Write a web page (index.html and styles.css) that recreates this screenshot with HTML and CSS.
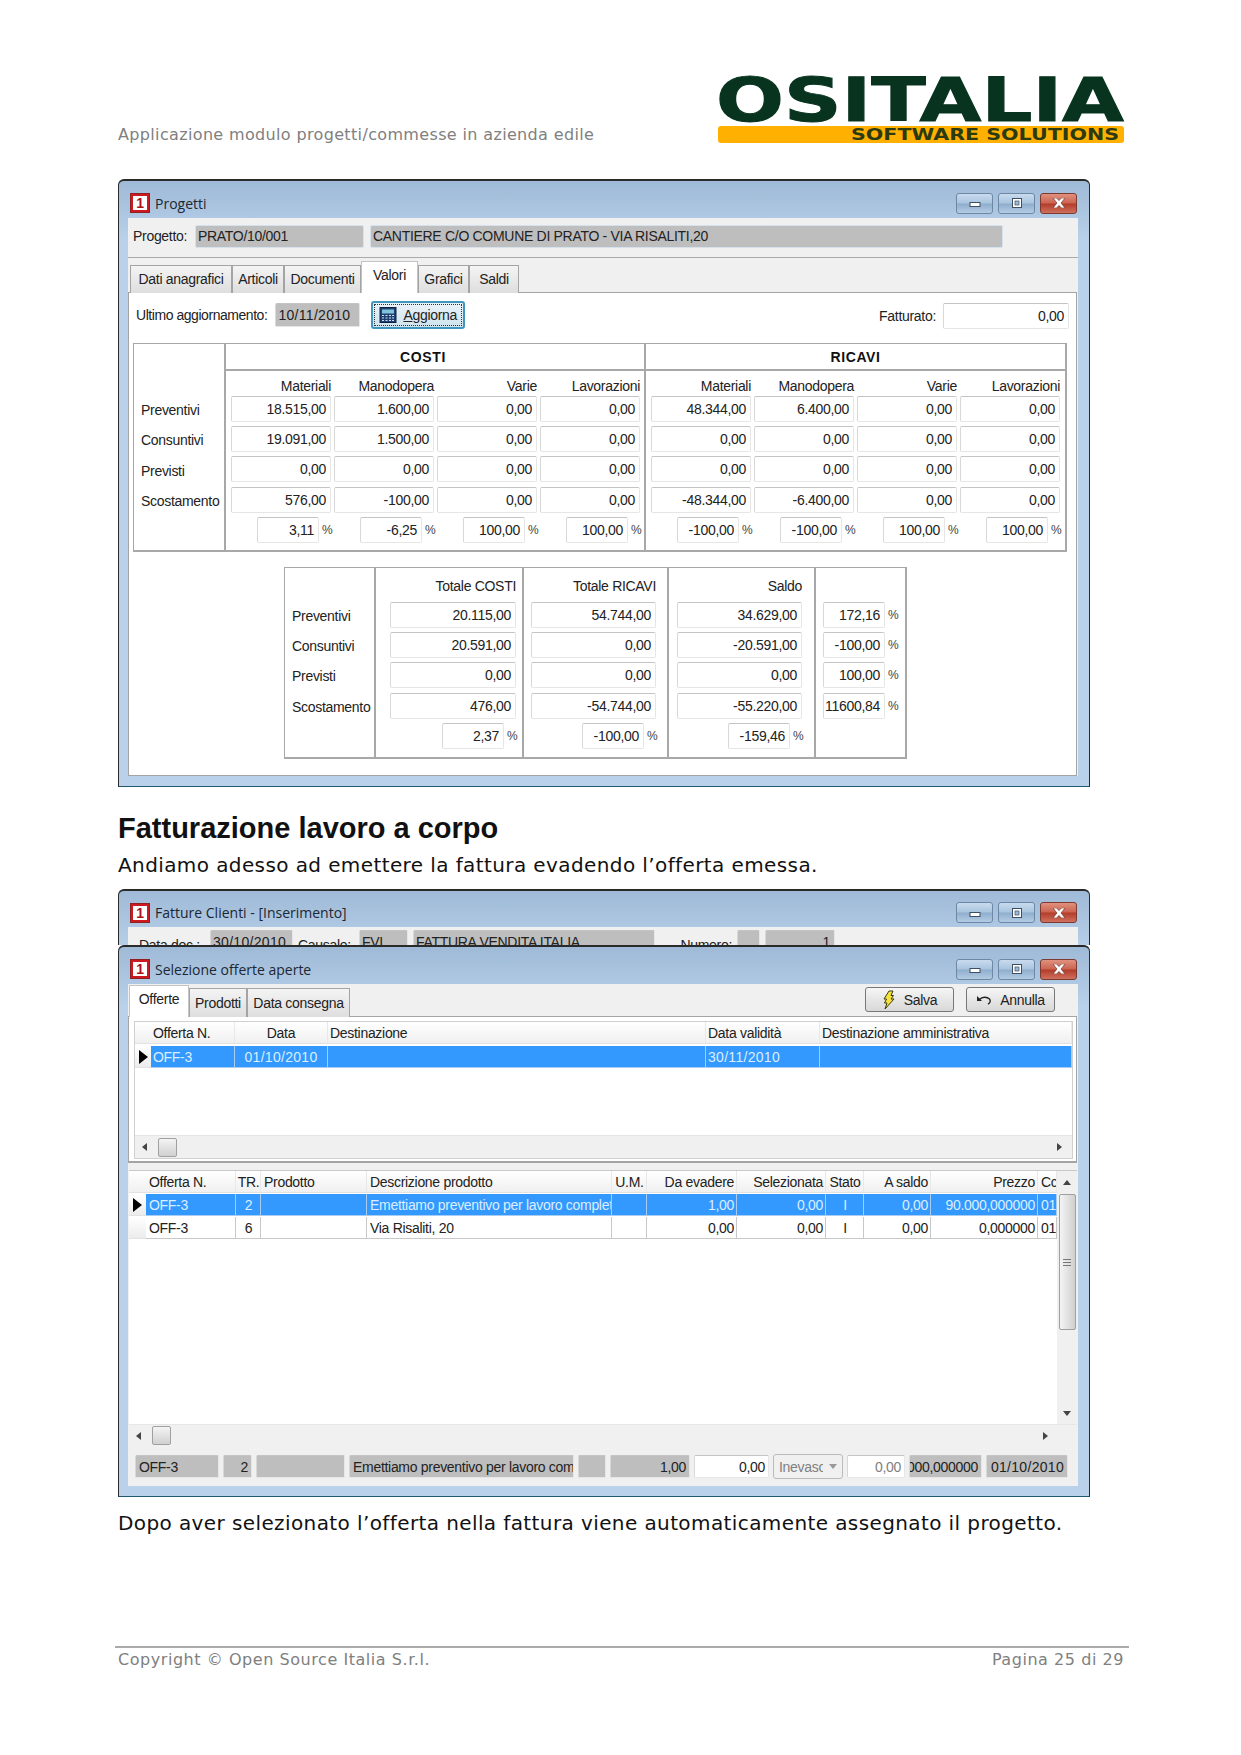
FILE: index.html
```html
<!DOCTYPE html>
<html lang="it">
<head>
    <meta charset="UTF-8">
    <meta name="viewport" content="width=device-width, initial-scale=1.0">
    <title>Applicazione modulo progetti/commesse in azienda edile</title>
    <link rel="stylesheet" href="styles.css">
</head>
<body>

<svg class="defs" xmlns="http://www.w3.org/2000/svg">
    <symbol id="ico-min" viewBox="0 0 14 10"><rect x="2" y="4.5" width="10" height="4" fill="#fff" stroke="#3d4f63"/></symbol>
    <symbol id="ico-max" viewBox="0 0 14 10"><rect x="2.5" y="0.5" width="9" height="9" fill="#fff" stroke="#3d4f63"/><rect x="5" y="3" width="4" height="4" fill="#9db9d6" stroke="#3d4f63" stroke-width="0.7"/></symbol>
    <symbol id="ico-close" viewBox="0 0 14 10"><path d="M1 0h3.6L7 2.6 9.4 0H13L9 5l4 5H9.4L7 7.4 4.6 10H1l4-5z" fill="#fff" stroke="#5a2a22" stroke-width="0.6"/></symbol>
</svg>

<div class="page">

    <header class="doc-head">
        <span class="doc-title">Applicazione modulo progetti/commesse in azienda edile</span>
        <svg class="logo" width="406" height="67" viewBox="0 0 406 67" xmlns="http://www.w3.org/2000/svg">
            <text x="-2" y="45" class="logo-main" textLength="408" lengthAdjust="spacingAndGlyphs">OSITALIA</text>
            <rect x="0" y="50" width="406" height="17" rx="3" fill="#ffb000"/>
            <text x="133" y="63.5" class="logo-sub" textLength="268" lengthAdjust="spacingAndGlyphs">SOFTWARE SOLUTIONS</text>
        </svg>
    </header>

    <section class="win win-progetti">
        <div class="titlebar">
            <span class="app-icon"><b>1</b></span>
            <span class="win-title">Progetti</span>
            <div class="win-buttons">
                <span class="wbtn"><svg width="14" height="10"><use href="#ico-min"/></svg></span>
                <span class="wbtn"><svg width="14" height="10"><use href="#ico-max"/></svg></span>
                <span class="wbtn wbtn-close"><svg width="14" height="10"><use href="#ico-close"/></svg></span>
            </div>
        </div>
        <div class="client">
            <div class="project-row">
                <span>Progetto:</span>
                <div class="field ro left">PRATO/10/001</div>
                <div class="field ro left">CANTIERE C/O COMUNE DI PRATO - VIA RISALITI,20</div>
            </div>
            <div class="tabs tabs-progetti">
                <div class="tab">Dati anagrafici</div>
                <div class="tab">Articoli</div>
                <div class="tab">Documenti</div>
                <div class="tab active">Valori</div>
                <div class="tab">Grafici</div>
                <div class="tab">Saldi</div>
            </div>
            <div class="panel">
                <div class="panel-toolbar">
                    <span class="upd-label">Ultimo aggiornamento:</span>
                    <div class="field ro left date date-field">10/11/2010</div>
                    <button class="btn-aggiorna">
                        <svg width="18" height="16" viewBox="0 0 18 16" xmlns="http://www.w3.org/2000/svg">
                            <rect x="1" y="0.5" width="16" height="15" fill="#1d3f72" stroke="#0e2244"/>
                            <rect x="3" y="2.5" width="12" height="4" fill="#7fc4d8"/>
                            <path d="M3 8.5h2M6.5 8.5h2M10 8.5h2M13 8.5h2M3 11h2M6.5 11h2M10 11h2M13 11h2M3 13.5h2M6.5 13.5h2M10 13.5h2M13 13.5h2" stroke="#cfe3ee" stroke-width="1.2"/>
                        </svg>
                        <span><u>A</u>ggiorna</span>
                    </button>
                    <span class="fatt-label">Fatturato:</span>
                    <div class="field fatt-field">0,00</div>
                </div>

                <div class="val-box">
                    <div class="val-labels">
                        <span>Preventivi</span>
                        <span>Consuntivi</span>
                        <span>Previsti</span>
                        <span>Scostamento</span>
                    </div>
                    <div class="val-head val-head-costi">COSTI</div>
                    <div class="val-head">RICAVI</div>
                    <div class="val-cols">
                        <span class="col-head">Materiali</span><span class="col-head">Manodopera</span><span class="col-head">Varie</span><span class="col-head">Lavorazioni</span>
                        <div class="field">18.515,00</div><div class="field">1.600,00</div><div class="field">0,00</div><div class="field">0,00</div>
                        <div class="field">19.091,00</div><div class="field">1.500,00</div><div class="field">0,00</div><div class="field">0,00</div>
                        <div class="field">0,00</div><div class="field">0,00</div><div class="field">0,00</div><div class="field">0,00</div>
                        <div class="field">576,00</div><div class="field">-100,00</div><div class="field">0,00</div><div class="field">0,00</div>
                        <div class="pct"><div class="field">3,11</div><i>%</i></div><div class="pct"><div class="field">-6,25</div><i>%</i></div><div class="pct"><div class="field">100,00</div><i>%</i></div><div class="pct"><div class="field">100,00</div><i>%</i></div>
                    </div>
                    <div class="val-cols">
                        <span class="col-head">Materiali</span><span class="col-head">Manodopera</span><span class="col-head">Varie</span><span class="col-head">Lavorazioni</span>
                        <div class="field">48.344,00</div><div class="field">6.400,00</div><div class="field">0,00</div><div class="field">0,00</div>
                        <div class="field">0,00</div><div class="field">0,00</div><div class="field">0,00</div><div class="field">0,00</div>
                        <div class="field">0,00</div><div class="field">0,00</div><div class="field">0,00</div><div class="field">0,00</div>
                        <div class="field">-48.344,00</div><div class="field">-6.400,00</div><div class="field">0,00</div><div class="field">0,00</div>
                        <div class="pct"><div class="field">-100,00</div><i>%</i></div><div class="pct"><div class="field">-100,00</div><i>%</i></div><div class="pct"><div class="field">100,00</div><i>%</i></div><div class="pct"><div class="field">100,00</div><i>%</i></div>
                    </div>
                </div>

                <div class="tot-box">
                    <div class="tot-col tot-labels">
                        <span class="col-head"></span>
                        <span>Preventivi</span>
                        <span>Consuntivi</span>
                        <span>Previsti</span>
                        <span>Scostamento</span>
                    </div>
                    <div class="tot-col tot-costi">
                        <span class="col-head">Totale COSTI</span>
                        <div class="field">20.115,00</div>
                        <div class="field">20.591,00</div>
                        <div class="field">0,00</div>
                        <div class="field">476,00</div>
                        <div class="pct"><div class="field">2,37</div><i>%</i></div>
                    </div>
                    <div class="tot-col tot-ricavi">
                        <span class="col-head">Totale RICAVI</span>
                        <div class="field">54.744,00</div>
                        <div class="field">0,00</div>
                        <div class="field">0,00</div>
                        <div class="field">-54.744,00</div>
                        <div class="pct"><div class="field">-100,00</div><i>%</i></div>
                    </div>
                    <div class="tot-col tot-saldo">
                        <span class="col-head">Saldo</span>
                        <div class="field">34.629,00</div>
                        <div class="field">-20.591,00</div>
                        <div class="field">0,00</div>
                        <div class="field">-55.220,00</div>
                        <div class="pct"><div class="field">-159,46</div><i>%</i></div>
                    </div>
                    <div class="tot-col tot-pct">
                        <span class="col-head"></span>
                        <div class="pct"><div class="field">172,16</div><i>%</i></div>
                        <div class="pct"><div class="field">-100,00</div><i>%</i></div>
                        <div class="pct"><div class="field">100,00</div><i>%</i></div>
                        <div class="pct"><div class="field">11600,84</div><i>%</i></div>
                    </div>
                </div>
            </div>
        </div>
    </section>

    <h2>Fatturazione lavoro a corpo</h2>
    <p class="lead">Andiamo adesso ad emettere la fattura evadendo l’offerta emessa.</p>

    <section class="win win-back">
        <div class="titlebar">
            <span class="app-icon"><b>1</b></span>
            <span class="win-title">Fatture Clienti - [Inserimento]</span>
            <div class="win-buttons">
                <span class="wbtn"><svg width="14" height="10"><use href="#ico-min"/></svg></span>
                <span class="wbtn"><svg width="14" height="10"><use href="#ico-max"/></svg></span>
                <span class="wbtn wbtn-close"><svg width="14" height="10"><use href="#ico-close"/></svg></span>
            </div>
        </div>
        <div class="client back-row">
            <span>Data doc.:</span>
            <div class="field ro left date">30/10/2010</div>
            <span>Causale:</span>
            <div class="field ro left">FVI</div>
            <div class="field ro left">FATTURA VENDITA ITALIA</div>
            <span class="num-label">Numero:</span>
            <div class="field ro"></div>
            <div class="field ro">1</div>
        </div>
    </section>

    <section class="win win-dialog">
        <div class="titlebar">
            <span class="app-icon"><b>1</b></span>
            <span class="win-title">Selezione offerte aperte</span>
            <div class="win-buttons">
                <span class="wbtn"><svg width="14" height="10"><use href="#ico-min"/></svg></span>
                <span class="wbtn"><svg width="14" height="10"><use href="#ico-max"/></svg></span>
                <span class="wbtn wbtn-close"><svg width="14" height="10"><use href="#ico-close"/></svg></span>
            </div>
        </div>
        <div class="client">
            <div class="dialog-top">
                <div class="tabs tabs-offerte">
                    <div class="tab active">Offerte</div>
                    <div class="tab">Prodotti</div>
                    <div class="tab">Data consegna</div>
                </div>
                <div class="dialog-actions">
                    <button class="btn-action">
                        <svg width="14" height="20" viewBox="0 0 14 20" xmlns="http://www.w3.org/2000/svg">
                            <path d="M7 1L2 9h2.5L2.5 13H5L3 19l9-10H9l2.5-3.5H9L11 1z" fill="#f5e23a" stroke="#3a3a10"/>
                        </svg>
                        Salva
                    </button>
                    <button class="btn-action">
                        <svg width="16" height="12" viewBox="0 0 16 12" xmlns="http://www.w3.org/2000/svg">
                            <path d="M1 2v5h5z" fill="#222"/>
                            <path d="M3.5 5.5C6 2.5 11 2.5 13.5 5c1.5 2 .5 4-1.5 5" fill="none" stroke="#222" stroke-width="1.4"/>
                        </svg>
                        Annulla
                    </button>
                </div>
            </div>

            <div class="offerte-panel">
                <div class="grid grid-offerte">
                    <div class="row head">
                        <div class="cell ind"></div>
                        <div class="cell">Offerta N.</div>
                        <div class="cell center">Data</div>
                        <div class="cell">Destinazione</div>
                        <div class="cell">Data validità</div>
                        <div class="cell">Destinazione amministrativa</div>
                    </div>
                    <div class="row selected">
                        <div class="cell ind"><span class="arrow"></span></div>
                        <div class="cell">OFF-3</div>
                        <div class="cell center date">01/10/2010</div>
                        <div class="cell"></div>
                        <div class="cell date">30/11/2010</div>
                        <div class="cell"></div>
                    </div>
                    <div class="grid-fill"></div>
                    <div class="hscroll">
                        <span class="tri tri-left"></span>
                        <span class="thumb"></span>
                        <span class="tri tri-right"></span>
                    </div>
                </div>
            </div>

            <div class="grid grid-righe">
                <div class="righe-body">
                    <div class="righe-table">
                        <div class="row head">
                            <div class="cell ind"></div>
                            <div class="cell">Offerta N.</div>
                            <div class="cell center">TR.</div>
                            <div class="cell">Prodotto</div>
                            <div class="cell">Descrizione prodotto</div>
                            <div class="cell center">U.M.</div>
                            <div class="cell right">Da evadere</div>
                            <div class="cell right">Selezionata</div>
                            <div class="cell center">Stato</div>
                            <div class="cell right">A saldo</div>
                            <div class="cell right">Prezzo</div>
                            <div class="cell">Cc</div>
                        </div>
                        <div class="row selected">
                            <div class="cell ind"><span class="arrow"></span></div>
                            <div class="cell">OFF-3</div>
                            <div class="cell center">2</div>
                            <div class="cell"></div>
                            <div class="cell">Emettiamo preventivo per lavoro completo</div>
                            <div class="cell"></div>
                            <div class="cell right">1,00</div>
                            <div class="cell right">0,00</div>
                            <div class="cell center">I</div>
                            <div class="cell right">0,00</div>
                            <div class="cell right">90.000,000000</div>
                            <div class="cell">01/10/2010</div>
                        </div>
                        <div class="row">
                            <div class="cell ind"></div>
                            <div class="cell">OFF-3</div>
                            <div class="cell center">6</div>
                            <div class="cell"></div>
                            <div class="cell">Via Risaliti, 20</div>
                            <div class="cell"></div>
                            <div class="cell right">0,00</div>
                            <div class="cell right">0,00</div>
                            <div class="cell center">I</div>
                            <div class="cell right">0,00</div>
                            <div class="cell right">0,000000</div>
                            <div class="cell">01/10/2010</div>
                        </div>
                    </div>
                    <div class="vscroll">
                        <span class="tri tri-up"></span>
                        <span class="vthumb"><span class="grip"></span></span>
                        <span class="vspace"></span>
                        <span class="tri tri-down"></span>
                    </div>
                </div>
                <div class="hscroll">
                    <span class="tri tri-left"></span>
                    <span class="thumb"></span>
                    <span class="tri tri-right"></span>
                </div>
            </div>

            <div class="bottom-fields">
                <div class="field ro left">OFF-3</div>
                <div class="field ro">2</div>
                <div class="field ro"></div>
                <div class="field ro left">Emettiamo preventivo per lavoro com</div>
                <div class="field ro"></div>
                <div class="field ro">1,00</div>
                <div class="field">0,00</div>
                <div class="combo"><span>Inevaso</span><span class="tri tri-down"></span></div>
                <div class="field dim">0,00</div>
                <div class="field ro">90.000,000000</div>
                <div class="field ro date">01/10/2010</div>
            </div>
        </div>
    </section>

    <p class="lead after">Dopo aver selezionato l’offerta nella fattura viene automaticamente assegnato il progetto.</p>

    <footer class="doc-foot">
        <span>Copyright © Open Source Italia S.r.l.</span>
        <span>Pagina 25 di 29</span>
    </footer>

</div>

</body>
</html>
```

FILE: styles.css
```css
* {
    box-sizing: border-box;
}
body {
    margin: 0;
    background: #fff;
    color: #111;
    font-family: "DejaVu Sans", sans-serif;
}
.defs {
    display: none;
}
.page {
    width: 1241px;
    padding: 76px 117px 0 118px;
}

/* document text */
.doc-head {
    display: flex;
    justify-content: space-between;
    align-items: flex-end;
    height: 67px;
}
.doc-title {
    margin-bottom: -2px;
    color: #808080;
    font-size: 16px;
    line-height: 20px;
    letter-spacing: 0.35px;
}
.logo {
    display: block;
    overflow: visible;
}
.logo-main {
    font-family: "DejaVu Sans", sans-serif;
    font-weight: bold;
    font-size: 60px;
    fill: #07331f;
    stroke: #07331f;
    stroke-width: 1;
}
.logo-sub {
    font-family: "DejaVu Sans", sans-serif;
    font-weight: bold;
    font-size: 15px;
    fill: #2c3a12;
}
h2 {
    margin: 27px 0 0;
    font-family: "Liberation Sans", sans-serif;
    font-size: 29px;
    line-height: 28px;
    font-weight: bold;
}
.lead {
    margin: 12px 0 13px;
    font-size: 20px;
    line-height: 22px;
    letter-spacing: 0.4px;
}
.lead.after {
    margin: 15px 0 0;
}
.doc-foot {
    display: flex;
    justify-content: space-between;
    margin: 112px -5px 0 -3px;
    padding: 2px 5px 0 3px;
    border-top: 2px solid #aaa;
    color: #808080;
    font-size: 16px;
    line-height: 20px;
    letter-spacing: 0.55px;
}

/* windows */
.win {
    width: 972px;
    padding: 0 11px 11px 9px;
    border: 1px solid #2a2a2a;
    border-top-width: 2px;
    border-bottom-color: #1d5a6e;
    border-radius: 6px 6px 0 0;
    background: linear-gradient(#9fbad7, #b9d1ea 60px);
    font-family: "Liberation Sans", sans-serif;
    font-size: 14px;
    letter-spacing: -0.3px;
    color: #222;
}
.win-progetti {
    height: 608px;
    margin-top: 36px;
}
.win-back {
    height: 56px;
    overflow: hidden;
    padding-bottom: 0;
    border-bottom: 0;
}
.win-dialog {
    height: 552px;
}
.titlebar {
    display: flex;
    align-items: center;
    height: 37px;
    margin: 0 1px 0 2px;
    padding-top: 7px;
}
.win-back .titlebar {
    height: 36px;
}
.app-icon {
    display: flex;
    align-items: center;
    justify-content: center;
    width: 20px;
    height: 20px;
    margin-right: 5px;
    border: 3px solid #cc1a20;
    outline: 1px solid #8e2020;
    outline-offset: -1px;
    background: #fff;
}
.app-icon b {
    color: #a81418;
    font: bold 14px/14px "Liberation Sans", sans-serif;
}
.win-title {
    font-family: "Open Sans", sans-serif;
    font-size: 14px;
    letter-spacing: 0;
    color: #1b2733;
}
.win-buttons {
    display: flex;
    gap: 5px;
    margin-left: auto;
}
.wbtn {
    display: flex;
    align-items: center;
    justify-content: center;
    width: 37px;
    height: 21px;
    border: 1px solid #6d88a5;
    border-radius: 3px;
    background: linear-gradient(#c9dbee, #a9c4de 48%, #8eadcd 52%, #b4cce4);
}
.wbtn-close {
    border-color: #7d3a30;
    background: linear-gradient(#e0917f, #cb6350 48%, #b23c2a 52%, #d0705e);
}
.client {
    background: #f0f0f0;
}

/* fields */
.field {
    display: flex;
    align-items: center;
    justify-content: flex-end;
    min-width: 0;
    height: 26px;
    padding: 0 4px;
    overflow: hidden;
    white-space: nowrap;
    border: 1px solid #e6e6e6;
    border-top-color: #c4c4c4;
    border-left-color: #d8d8d8;
    border-radius: 2px;
    background: #fff;
}
.field.left {
    justify-content: flex-start;
    padding: 0 2px;
}
.field.ro {
    background: #bebebe;
}
.field.dim {
    color: #808080;
}
.date {
    letter-spacing: 0.3px;
}
.pct {
    display: flex;
    justify-content: flex-end;
    align-items: center;
    gap: 3px;
}
.pct .field {
    width: 62px;
}
.pct i {
    width: 9px;
    font-style: normal;
    font-size: 12px;
    letter-spacing: -1px;
    color: #444;
}

/* Progetti window */
.project-row {
    display: grid;
    grid-template-columns: 56px 169px 633px;
    column-gap: 6px;
    align-items: center;
    height: 40px;
    padding: 0 0 3px 5px;
    border-bottom: 1px solid #aaa;
}
.project-row .field {
    height: 23px;
    border-color: #d5e2ee;
}
.tabs {
    display: grid;
    align-items: end;
    height: 34px;
}
.tabs-progetti {
    grid-template-columns: 102px 52px 77px 57px 51px 50px;
    margin-left: 2px;
}
.tabs-progetti .tab {
    padding-bottom: 2px;
}
.tabs-offerte {
    grid-template-columns: 60px 58px 103px;
    height: 32px;
    margin-left: 1px;
}
.tab {
    display: flex;
    align-items: center;
    justify-content: center;
    height: 28px;
    margin-bottom: -1px;
    border: 1px solid #a4a4a4;
    border-bottom: 0;
    background: linear-gradient(#f4f4f4, #dedede);
}
.tab.active,
.tabs-progetti .tab.active {
    position: relative;
    height: 32px;
    padding-bottom: 5px;
    border-color: #c4c4c4;
    background: #fff;
    z-index: 1;
}
.tabs-offerte .tab {
    height: 29px;
}
.tabs-offerte .tab.active {
    height: 32px;
}
.panel {
    height: 484px;
    margin-right: 1px;
    border: 1px solid #a4a4a4;
    background: #fff;
}
.panel-toolbar {
    display: flex;
    align-items: center;
    height: 50px;
    padding: 0 7px 6px 7px;
}
.upd-label {
    letter-spacing: -0.45px;
}
.date-field {
    width: 85px;
    height: 24px;
    margin: -1px 0 0 8px;
    padding-left: 2px;
}
.btn-aggiorna {
    display: flex;
    align-items: center;
    gap: 6px;
    width: 94px;
    height: 28px;
    margin: -1px 0 0 11px;
    padding: 0 4px 0 6px;
    border: 2px solid #3f97bd;
    border-radius: 3px;
    outline: 1px dotted #333;
    outline-offset: -4px;
    background: linear-gradient(#eaf3f8, #cfe3ee);
    font: inherit;
    letter-spacing: inherit;
    color: inherit;
}
.fatt-label {
    margin: 2px 7px 0 auto;
}
.fatt-field {
    width: 126px;
    margin-top: 2px;
}

/* valori table */
.val-box {
    display: grid;
    grid-template-columns: 92px 418px 1fr;
    grid-template-rows: 27px 1fr;
    width: 934px;
    height: 209px;
    margin-left: 4px;
    border: 2px solid #a8a8a8;
    border-width: 1px 2px 2px 1px;
}
.val-labels {
    grid-row: 1 / 3;
    display: grid;
    grid-auto-rows: 26px;
    row-gap: 4.25px;
    padding: 53px 0 0 7px;
    border-right: 2px solid #a8a8a8;
}
.val-labels span,
.tot-labels span {
    display: flex;
    align-items: center;
}
.val-head {
    display: flex;
    align-items: center;
    justify-content: center;
    border-bottom: 2px solid #a8a8a8;
    font-weight: bold;
    letter-spacing: 0.6px;
    color: #111;
}
.val-head-costi {
    padding-right: 24px;
}
.val-head + .val-head {
    border-left: 2px solid #a8a8a8;
}
.val-cols {
    display: grid;
    grid-template-columns: repeat(4, 100px);
    grid-template-rows: 20.5px repeat(5, 26px);
    column-gap: 3px;
    row-gap: 4.25px;
    padding-left: 5px;
}
.val-cols + .val-cols {
    border-left: 2px solid #a8a8a8;
    padding-left: 5px;
}
.val-cols .col-head {
    height: 20.5px;
    line-height: 30px;
}
.col-head {
    display: block;
    text-align: right;
    white-space: nowrap;
}

/* totals table */
.tot-box {
    display: grid;
    grid-template-columns: 89px 148px 145px 147px 1fr;
    width: 623px;
    height: 192px;
    margin: 15px 0 0 155px;
    border: 2px solid #a8a8a8;
    border-width: 1px 2px 2px 1px;
}
.tot-col {
    display: grid;
    grid-template-rows: 25.6px;
    grid-auto-rows: 26px;
    row-gap: 4.25px;
    padding-top: 4px;
    border-left: 2px solid #a8a8a8;
}
.tot-labels {
    padding: 5px 0 0 7px;
    border-left: 0;
}
.tot-costi {
    padding-left: 14px;
    padding-right: 6px;
}
.tot-ricavi {
    padding-left: 7px;
    padding-right: 11px;
}
.tot-saldo {
    padding-left: 8px;
    padding-right: 12px;
}
.tot-pct {
    padding-left: 7px;
}
.tot-col .col-head {
    height: 25.6px;
    line-height: 29px;
}
.tot-pct .pct {
    justify-content: flex-start;
}

/* Fatture window behind the dialog */
.back-row {
    display: grid;
    grid-template-columns: 66px 83px 56px 49px 242px 72px 23px 70px;
    column-gap: 5px;
    height: 20px;
    padding: 3px 0 0 11px;
    overflow: hidden;
    align-items: start;
}
.back-row span {
    padding-top: 7px;
}
.back-row .field {
    height: 26px;
    align-items: flex-start;
    padding-top: 3px;
}
.num-label {
    text-align: right;
}

/* dialog */
.dialog-top {
    display: flex;
    justify-content: space-between;
    height: 32px;
}
.dialog-actions {
    display: flex;
    gap: 12px;
    padding: 3px 23px 0 0;
}
.btn-action {
    display: flex;
    align-items: center;
    justify-content: center;
    gap: 8px;
    width: 89px;
    height: 25px;
    padding: 0;
    border: 1px solid #777;
    border-radius: 3px;
    background: linear-gradient(#f6f6f6, #e6e6e6 50%, #d8d8d8);
    font: inherit;
    letter-spacing: inherit;
    color: inherit;
}
.offerte-panel {
    height: 147px;
    margin-right: 1px;
    padding: 4px 3px 3px 5px;
    border: 1px solid #a4a4a4;
    border-width: 1px 1px 2px 1px;
    background: #fff;
}
.grid {
    display: flex;
    flex-direction: column;
    background: #fff;
}
.grid-offerte {
    height: 138px;
    border: 1px solid #d0d0d0;
}
.grid-fill {
    flex: 1;
}
.row {
    display: grid;
    height: 22px;
    align-items: stretch;
    margin-bottom: 1px;
}
.grid-offerte .row {
    grid-template-columns: 16px 84px 93px 378px 114px 1fr;
}
.grid-offerte .row.head {
    margin-bottom: 2px;
}
.righe-table .row {
    grid-template-columns: 17px 90px 25px 106px 245px 35px 90px 89px 38px 67px 107px 1fr;
}
.cell {
    display: flex;
    align-items: center;
    min-width: 0;
    padding: 0 2px;
    overflow: hidden;
    white-space: nowrap;
    border-right: 1px solid #c8c8c8;
    border-bottom: 1px solid #c8c8c8;
}
.righe-table .cell {
    padding: 0 2px 0 3px;
}
.cell.center {
    justify-content: center;
}
.cell.right {
    justify-content: flex-end;
}
.row.head .cell {
    border-right-color: #e8e8e8;
    border-bottom-color: #e2e2e2;
    background: linear-gradient(#fff, #f0f0f0);
}
.cell.ind {
    justify-content: center;
    padding: 0;
    background: linear-gradient(#fff, #ececec);
    border-right: 0;
    border-bottom-color: #e2e2e2;
}
.row.selected .cell:not(.ind) {
    background: #3399ff;
    color: #dbeeff;
    border-right-color: #a8cdf0;
    border-bottom-color: #a8cdf0;
}
.arrow {
    border-left: 9px solid #000;
    border-top: 7px solid transparent;
    border-bottom: 7px solid transparent;
}
.hscroll {
    display: flex;
    align-items: center;
    justify-content: space-between;
    height: 23px;
    padding: 0 10px 0 7px;
    border-top: 1px solid #e6e6e6;
    background: #f0f0f0;
}
.thumb {
    width: 19px;
    height: 19px;
    margin-right: auto;
    margin-left: 11px;
    border: 1px solid #a0a0a0;
    border-radius: 2px;
    background: linear-gradient(#f4f4f4, #d0d0d0);
}
.tri {
    display: block;
    width: 0;
    height: 0;
    border: 4px solid transparent;
}
.tri-left {
    border-left: 0;
    border-right: 5px solid #444;
}
.tri-right {
    border-right: 0;
    border-left: 5px solid #444;
}
.tri-up {
    border-top: 0;
    border-bottom: 5px solid #444;
}
.tri-down {
    border-bottom: 0;
    border-top: 5px solid #444;
}
.grid-righe {
    height: 276px;
    margin: 7px 1px 0 1px;
    border-top: 1px solid #c8c8c8;
}
.righe-body {
    flex: 1;
    display: flex;
}
.righe-table {
    flex: 1;
    min-width: 0;
}
.vscroll {
    display: flex;
    flex-direction: column;
    align-items: center;
    width: 20px;
    padding: 9px 0 8px;
    background: #f0f0f0;
}
.vthumb {
    display: flex;
    align-items: center;
    justify-content: center;
    width: 17px;
    height: 136px;
    margin-top: 9px;
    border: 1px solid #a0a0a0;
    border-radius: 2px;
    background: linear-gradient(90deg, #f4f4f4, #d0d0d0);
}
.grip {
    width: 8px;
    height: 7px;
    border-top: 1px solid #777;
    border-bottom: 1px solid #777;
    background: linear-gradient(#777, #777) center / 100% 1px no-repeat;
}
.vspace {
    flex: 1;
}
.grid-righe .hscroll {
    height: 22px;
    padding-right: 29px;
}
.bottom-fields {
    display: grid;
    grid-template-columns: 84px 29px 89px 225px 28px 80px 75px 70px 58px 73px 82px;
    column-gap: 4px;
    height: 40px;
    margin-left: 7px;
    padding-top: 9px;
}
.bottom-fields .field {
    height: 23px;
    padding: 0 3px;
}
.combo {
    display: flex;
    align-items: center;
    justify-content: space-between;
    height: 25px;
    margin-top: -1px;
    padding: 0 5px 0 5px;
    overflow: hidden;
    border: 1px solid #bbb;
    border-radius: 3px;
    background: #f0f0f0;
    color: #808080;
    white-space: nowrap;
}
.combo span:first-child {
    width: 44px;
    overflow: hidden;
}
.combo .tri-down {
    border-top-color: #999;
}
```
